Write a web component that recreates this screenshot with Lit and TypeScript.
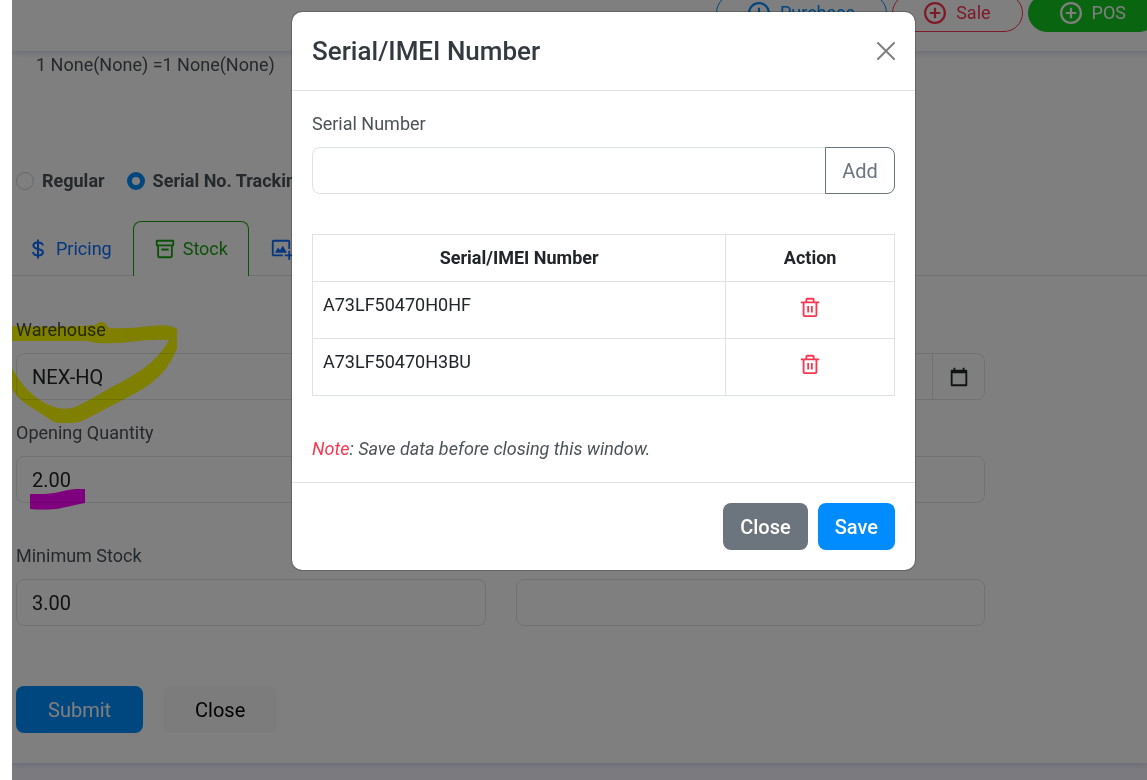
import { LitElement, html, css, svg } from "lit";
import { customElement, state } from "lit/decorators.js";

const plusCircle = html`<svg class="icon" viewBox="1 1 22 22" fill="currentColor" aria-hidden="true">
  <path d="M13.100 6.800h-2.200v4.100H6.800v2.200h4.100v4.100h2.200v-4.100h4.100v-2.200h-4.100z" />
  <path d="M12 1C5.900 1 1 5.900 1 12s4.900 11 11 11 11-4.900 11-11S18.100 1 12 1zm0 19.700c-4.800 0-8.700-3.900-8.700-8.700S7.200 3.300 12 3.300s8.700 3.900 8.700 8.700-3.900 8.700-8.700 8.700z" />
</svg>`;

const dollar = html`<svg class="icon" viewBox="0 0 22 22" fill="none" stroke="currentColor" stroke-width="2" aria-hidden="true">
  <path d="M11 1.500v19" />
  <path d="M15.800 7.500C15.600 5.300 13.800 4.600 11 4.600c-3 0-4.600 1.200-4.600 3 0 2.200 1.800 2.800 4.600 3.300 3.200.600 4.900 1.200 4.900 3.300 0 2-1.800 3.200-4.900 3.200-3.200 0-4.900-1-5.100-3.400" />
</svg>`;

const archive = html`<svg class="icon" viewBox="0 0 24 24" fill="currentColor" aria-hidden="true">
  <path d="M21 2H3a1 1 0 0 0-1 1v5a1 1 0 0 0 1 1h.500v11a2 2 0 0 0 2 2h13a2 2 0 0 0 2-2V9H21a1 1 0 0 0 1-1V3a1 1 0 0 0-1-1zm-2.500 18h-13V9h13zM20 7H4V4h16z" />
  <path d="M8 11.500h8v2.200H8z" />
</svg>`;

const imageAdd = html`<svg class="icon" viewBox="0 0 24 24" fill="currentColor" aria-hidden="true">
  <path d="M4 20h10v-2H4V4h16v8h2V4c0-1.100-.900-2-2-2H4a2 2 0 0 0-2 2v14c0 1.100.900 2 2 2z" />
  <path d="m8.500 10.500-3 5.500h13l-4.500-7.500-3 4.500z" />
  <path d="M22 14h-2v4h-4v2h4v4h2v-4h4v-2h-4z" />
</svg>`;

const calendar = html`<svg class="icon" viewBox="0 0 24 24" fill="currentColor" aria-hidden="true">
  <path d="M20 4h-2V2h-2v2H8V2H6v2H4a1 1 0 0 0-1 1v16a1 1 0 0 0 1 1h16a1 1 0 0 0 1-1V5a1 1 0 0 0-1-1zM5 20V8h14v12z" />
</svg>`;

const trash = html`<svg class="icon" viewBox="0 0 24 24" fill="currentColor" aria-hidden="true">
  <path d="M17 6V4a2 2 0 0 0-2-2H9a2 2 0 0 0-2 2v2H2v2h2v13a2 2 0 0 0 2 2h12a2 2 0 0 0 2-2V8h2V6zM9 4h6v2H9zM6 21V8h12v13z" />
  <path d="M9 11h2v7H9zM13 11h2v7h-2z" />
</svg>`;

const highlights = svg`
  <path fill="#ff0" d="M0 26 Q50 28 83 25 L88 22 H92 L97 28 Q118 29 138 26 Q155 24 161 27 L165 29 V48 C158 66 148 80 122 94 L72 120 Q66 123 60 123 H46 Q40 122 36 118 L14 104 Q4 96 0 89 V68 C8 84 22 100 42 107 Q50 110 60 108 Q68 106 98 88 C130 72 146 60 157 40 Q142 39 118 42 Q100 44 84 43 L75 41 H0 Z" />
  <path fill="#f0f" d="M18 194 H33 Q45 193 56 190 L63 189 H73 V203 L63 205 Q50 208 44 209 Q30 210 18 209 Z" />`;

@customElement("app-root")
export class AppRoot extends LitElement {
  @state() private serials = ["A73LF50470H0HF", "A73LF50470H3BU"];

  static styles = css`
    :host { display: block; background: #fff; }
    * { box-sizing: border-box; }
    .stage {
      position: relative; margin-left: 12px; min-height: 100vh; overflow: hidden;
      background: #f7f7ff; color: #4c5258;
      font: 18px/26px Roboto, "Liberation Sans", sans-serif;
    }
    button, input, select { font: inherit; color: inherit; margin: 0; }
    button { cursor: pointer; background: none; border: 0; padding: 0; }
    .icon { width: 22px; height: 22px; flex: none; display: block; overflow: visible; }

    .topbar {
      position: relative; z-index: 1; height: 51px; padding-bottom: 19px; margin-right: -11px;
      display: flex; justify-content: flex-end; align-items: flex-end; gap: 5px;
      background: #fff; box-shadow: 0 2px 6px rgba(206, 206, 238, 0.8);
    }
    .pill {
      height: 38px; padding: 0 31px; display: flex; align-items: center; gap: 10px;
      border: 1px solid currentColor; border-radius: 19px; color: #008cff;
    }
    .pill.sale { color: #fd3550; }
    .pill.pos { background: #15ca20; border-color: #15ca20; color: #fff; }

    .card { position: relative; background: #fff; padding: 1px 0 30px; box-shadow: 0 2px 6px rgba(206, 206, 238, 0.9); }
    .unit { margin: 0 0 90px 24px; }
    .modes { display: flex; gap: 22px; padding-left: 4px; margin-bottom: 27px; font-weight: 700; }
    .mode { display: flex; align-items: center; gap: 8px; }
    .mode input {
      appearance: none; width: 18px; height: 18px; border-radius: 50%;
      border: 1px solid #d0d0d0; background: #fff;
    }
    .mode input:checked { border: 5px solid #008cff; }

    .tabs { display: flex; margin-left: -6px; border-bottom: 1px solid #dee2e6; margin-bottom: 41px; }
    .tab {
      display: flex; align-items: center; gap: 7px; padding: 14px 20px; margin-bottom: -1px;
      border: 1px solid transparent; border-bottom: 0; border-radius: 8px 8px 0 0;
      color: #0d6efd; text-decoration: none;
    }
    .tab.on { color: #1ba312; border-color: #1ba312; background: #fff; }

    .form { padding: 0 162px 0 4px; }
    .row { display: grid; grid-template-columns: 1fr 1fr; gap: 30px; align-items: end; margin-bottom: 20px; }
    .row.wide { margin-bottom: 40px; }
    .row.last { margin-bottom: 60px; }
    .field { display: flex; flex-direction: column; gap: 10px; }
    .control {
      width: 100%; min-width: 0; height: 47px; padding: 0 15px; border: 1px solid #dee2e6; border-radius: 8px;
      background: #fff; color: #212529; font-size: 20px; appearance: none; outline: 0;
    }
    .group { display: flex; }
    .group .control { border-radius: 8px 0 0 8px; }
    .addon {
      flex: none; width: 53px; margin-left: -1px; display: grid; place-items: center;
      border: 1px solid #dee2e6; border-radius: 0 8px 8px 0; color: #212529;
    }
    .actions { display: flex; gap: 20px; }
    .btn { height: 47px; padding: 0 17px; border-radius: 8px; font-size: 20px; }
    .btn.primary { background: #008cff; color: #fff; }
    .btn.secondary { background: #6c757d; color: #fff; }
    .btn.light { background: #f8f9fa; color: #000; }
    .btn.large { padding: 0 32px; }
    .btn.medium { font-weight: 500; }

    .ink { position: absolute; left: 0; top: 300px; width: 180px; height: 220px; mix-blend-mode: multiply; pointer-events: none; }

    .backdrop {
      position: absolute; inset: 0; z-index: 2; background: rgba(0, 0, 0, 0.5);
      display: flex; justify-content: center; align-items: flex-start; padding: 11px 0 11px 48px;
    }
    .modal {
      width: 100%; max-width: 625px; background: #fff; background-clip: padding-box;
      border: 1px solid rgba(0, 0, 0, 0.2); border-radius: 11px;
    }
    .head { display: flex; align-items: center; justify-content: space-between; padding: 20px; border-bottom: 1px solid #dee2e6; }
    .title { margin: 0; font-size: 26px; line-height: 38px; font-weight: 500; color: #32393f; }
    .x { width: 18px; height: 18px; opacity: 0.5; color: #000; }
    .x svg { display: block; width: 18px; height: 18px; }
    .body { padding: 20px; }
    .add {
      flex: none; width: 70px; height: 47px; margin-left: -1px; border: 1px solid #6c757d;
      border-radius: 0 8px 8px 0; color: #6c757d; font-size: 20px;
    }
    .serials { width: 100%; margin: 40px 0; border-collapse: collapse; table-layout: fixed; color: #212529; }
    .serials th, .serials td { border: 1px solid #dee2e6; padding: 10px; vertical-align: top; text-align: left; }
    .serials th { text-align: center; font-weight: 700; }
    .serials .act { width: 29%; text-align: center; }
    .del { display: block; height: 36px; margin: 0 auto; padding: 4px 0 10px; color: #fd3550; }
    .note { margin: 0; font-style: italic; }
    .note .key { color: #fd3550; }
    .foot { display: flex; justify-content: flex-end; gap: 10px; padding: 20px; border-top: 1px solid #dee2e6; }
  `;

  private remove(serial: string) {
    this.serials = this.serials.filter((s) => s !== serial);
  }

  private add() {
    const box = this.renderRoot.querySelector<HTMLInputElement>("#serial")!;
    if (box.value.trim()) this.serials = [...this.serials, box.value.trim()];
    box.value = "";
  }

  render() {
    return html`
      <div class="stage">
        <header class="topbar">
          <button class="pill">${plusCircle}Purchase</button>
          <button class="pill sale">${plusCircle}Sale</button>
          <button class="pill pos">${plusCircle}POS</button>
        </header>
        <main class="card">
          <p class="unit">1 None(None) =1 None(None)</p>
          <div class="modes">
            <label class="mode"><input type="radio" name="mode" />Regular</label>
            <label class="mode"><input type="radio" name="mode" checked />Serial No. Tracking</label>
          </div>
          <nav class="tabs">
            <a class="tab" href="#pricing">${dollar}Pricing</a>
            <a class="tab on" href="#stock">${archive}Stock</a>
            <a class="tab" href="#image">${imageAdd}Image</a>
          </nav>
          <div class="form">
            <div class="row">
              <div class="field">
                <label for="warehouse">Warehouse</label>
                <select class="control" id="warehouse"><option>NEX-HQ</option></select>
              </div>
              <div class="group">
                <input class="control" type="text" aria-label="Date" />
                <button class="addon" aria-label="Pick a date">${calendar}</button>
              </div>
            </div>
            <div class="row wide">
              <div class="field">
                <label for="opening">Opening Quantity</label>
                <input class="control" id="opening" value="2.00" />
              </div>
              <input class="control" aria-label="Stock price" />
            </div>
            <div class="row last">
              <div class="field">
                <label for="minimum">Minimum Stock</label>
                <input class="control" id="minimum" value="3.00" />
              </div>
              <input class="control" aria-label="Item location" />
            </div>
            <div class="actions">
              <button class="btn primary large">Submit</button>
              <button class="btn light large">Close</button>
            </div>
          </div>
        </main>
        <svg class="ink" viewBox="0 0 180 220" aria-hidden="true">${highlights}</svg>
        <div class="backdrop">
          <section class="modal" role="dialog" aria-labelledby="title">
            <div class="head">
              <h5 class="title" id="title">Serial/IMEI Number</h5>
              <button class="x" aria-label="Dismiss">
                <svg viewBox="0 0 18 18" stroke="currentColor" stroke-width="2" stroke-linecap="round">
                  <path d="M1 1l16 16M17 1L1 17" />
                </svg>
              </button>
            </div>
            <div class="body">
              <div class="field">
                <label for="serial">Serial Number</label>
                <div class="group">
                  <input class="control" id="serial" />
                  <button class="add" @click=${this.add}>Add</button>
                </div>
              </div>
              <table class="serials">
                <thead>
                  <tr><th>Serial/IMEI Number</th><th class="act">Action</th></tr>
                </thead>
                <tbody>
                  ${this.serials.map(
                    (s) => html`<tr>
                      <td>${s}</td>
                      <td class="act">
                        <button class="del" aria-label="Delete ${s}" @click=${() => this.remove(s)}>${trash}</button>
                      </td>
                    </tr>`
                  )}
                </tbody>
              </table>
              <p class="note"><span class="key">Note</span>: Save data before closing this window.</p>
            </div>
            <div class="foot">
              <button class="btn secondary medium">Close</button>
              <button class="btn primary medium">Save</button>
            </div>
          </section>
        </div>
      </div>
    `;
  }
}
